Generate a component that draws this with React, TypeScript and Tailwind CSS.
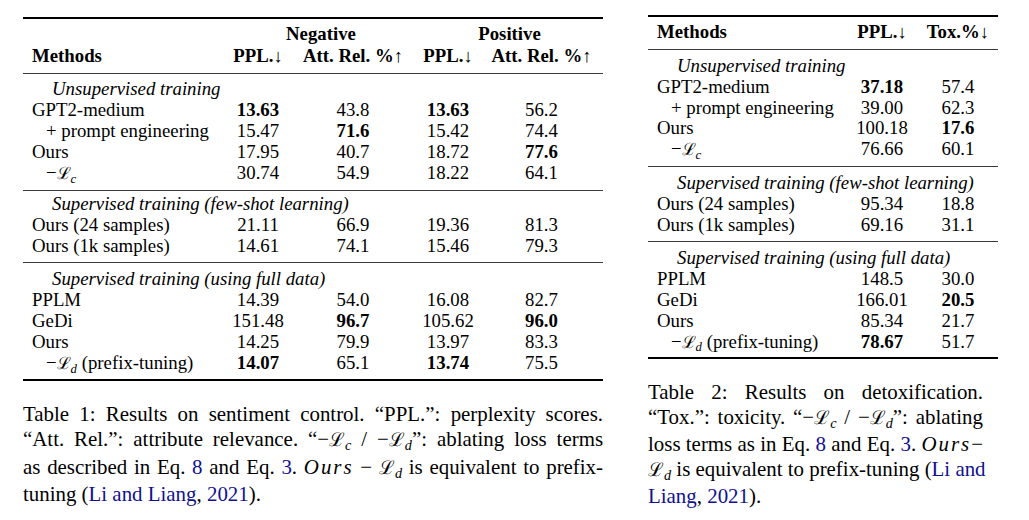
import { FC, ReactNode } from "react";

// "*" at the start of a value marks it bold
type Row = { label: ReactNode; indent?: boolean; values: string[] };
type Section = { title: string; pad: string; rows: Row[] };

const Cal: FC<{ s: string }> = ({ s }) => (
	<span className="whitespace-nowrap">
		<span className="font-['DejaVu_Serif',serif] text-[0.9em]">ℒ</span>
		<span className="relative top-[0.28em] text-[0.68em] italic">{s}</span>
	</span>
);

const Link: FC<{ children: ReactNode }> = ({ children }) => (
	<span className="text-[#101090]">{children}</span>
);

const table1: Section[] = [
	{
		title: "Unsupervised training",
		pad: "pt-[4px] pb-[7px]",
		rows: [
			{ label: "GPT2-medium", values: ["*13.63", "43.8", "*13.63", "56.2"] },
			{ label: "+ prompt engineering", indent: true, values: ["15.47", "*71.6", "15.42", "74.4"] },
			{ label: "Ours", values: ["17.95", "40.7", "18.72", "*77.6"] },
			{ label: <>−<Cal s="c" /></>, indent: true, values: ["30.74", "54.9", "18.22", "64.1"] },
		],
	},
	{
		title: "Supervised training (few-shot learning)",
		pad: "pt-[2px] pb-[6px]",
		rows: [
			{ label: "Ours (24 samples)", values: ["21.11", "66.9", "19.36", "81.3"] },
			{ label: "Ours (1k samples)", values: ["14.61", "74.1", "15.46", "79.3"] },
		],
	},
	{
		title: "Supervised training (using full data)",
		pad: "pt-[5px] pb-[6px]",
		rows: [
			{ label: "PPLM", values: ["14.39", "54.0", "16.08", "82.7"] },
			{ label: "GeDi", values: ["151.48", "*96.7", "105.62", "*96.0"] },
			{ label: "Ours", values: ["14.25", "79.9", "13.97", "83.3"] },
			{ label: <>−<Cal s="d" /> (prefix-tuning)</>, indent: true, values: ["*14.07", "65.1", "*13.74", "75.5"] },
		],
	},
];

const table2: Section[] = [
	{
		title: "Unsupervised training",
		pad: "pt-[5px] pb-[7px]",
		rows: [
			{ label: "GPT2-medium", values: ["*37.18", "57.4"] },
			{ label: "+ prompt engineering", indent: true, values: ["39.00", "62.3"] },
			{ label: "Ours", values: ["100.18", "*17.6"] },
			{ label: <>−<Cal s="c" /></>, indent: true, values: ["76.66", "60.1"] },
		],
	},
	{
		title: "Supervised training (few-shot learning)",
		pad: "pt-[5px] pb-[7px]",
		rows: [
			{ label: "Ours (24 samples)", values: ["95.34", "18.8"] },
			{ label: "Ours (1k samples)", values: ["69.16", "31.1"] },
		],
	},
	{
		title: "Supervised training (using full data)",
		pad: "pt-[5px] pb-[6px]",
		rows: [
			{ label: "PPLM", values: ["148.5", "30.0"] },
			{ label: "GeDi", values: ["166.01", "*20.5"] },
			{ label: "Ours", values: ["85.34", "21.7"] },
			{ label: <>−<Cal s="d" /> (prefix-tuning)</>, indent: true, values: ["*78.67", "51.7"] },
		],
	},
];

const Value: FC<{ v: string }> = ({ v }) =>
	v.startsWith("*") ? <span className="font-bold">{v.slice(1)}</span> : <span>{v}</span>;

const Body: FC<{ sections: Section[]; grid: string; rowH: string }> = ({ sections, grid, rowH }) => (
	<>
		{sections.map((sec, i) => (
			<div key={i}>
				<div className="h-px bg-[#3a3a3a]" />
				<div className={sec.pad}>
					<div className={`${rowH} pl-[29px] italic`}>{sec.title}</div>
					{sec.rows.map((r, j) => (
						<div key={j} className={`${grid} ${rowH}`}>
							<div className={r.indent ? "pl-[23px] whitespace-nowrap" : "pl-[9px] whitespace-nowrap"}>{r.label}</div>
							{r.values.map((v, k) => (
								<div key={k} className="text-center">
									<Value v={v} />
								</div>
							))}
						</div>
					))}
				</div>
			</div>
		))}
	</>
);

const Line: FC<{ children: ReactNode; last?: boolean }> = ({ children, last }) => (
	<div className={last ? "text-left whitespace-nowrap" : "text-justify [text-align-last:justify] whitespace-nowrap"}>{children}</div>
);

const Arrow: FC<{ up?: boolean }> = ({ up }) => <span className="font-normal">{up ? "↑" : "↓"}</span>;

export default function App() {
	const grid1 = "grid grid-cols-[203px_64px_126px_64px_123px]";
	const grid2 = "grid grid-cols-[198px_72px_80px]";

	return (
		<div className="w-[1029px] h-[520px] bg-white text-black font-['Liberation_Serif','DejaVu_Serif',serif] flex gap-[45px] pl-[23px] pt-[15px] overflow-hidden">
			{/* Table 1 */}
			<div className="w-[580px] pt-[2px] flex flex-col">
				<div className="text-[18.8px] leading-[21px]">
					<div className="h-[2px] bg-black" />
					<div className="pt-[4px] pb-[6px] font-bold">
						<div className={`${grid1} h-[22px]`}>
							<div />
							<div className="col-span-2 text-center">Negative</div>
							<div className="col-span-2 text-center">Positive</div>
						</div>
						<div className={`${grid1} h-[22px]`}>
							<div className="pl-[9px]">Methods</div>
							<div className="text-center">PPL.<Arrow /></div>
							<div className="text-center whitespace-nowrap">Att. Rel. %<Arrow up /></div>
							<div className="text-center">PPL.<Arrow /></div>
							<div className="text-center whitespace-nowrap">Att. Rel. %<Arrow up /></div>
						</div>
					</div>
					<Body sections={table1} grid={grid1} rowH="h-[21px]" />
					<div className="h-[2px] bg-black" />
				</div>
				<div className="mt-[21px] text-[20.9px] leading-[25.3px]">
					<Line>Table 1: Results on sentiment control. “PPL.”: perplexity scores.</Line>
					<Line>
						“Att. Rel.”: attribute relevance. “−<Cal s="c" /> / −<Cal s="d" />”: ablating loss terms
					</Line>
					<Line>
						as described in Eq. <Link>8</Link> and Eq. <Link>3</Link>.{" "}
						<span className="italic tracking-[2px]">Ours</span> − <Cal s="d" /> is equivalent to prefix-
					</Line>
					<Line last>
						tuning (<Link>Li and Liang</Link>, <Link>2021</Link>).
					</Line>
				</div>
			</div>

			{/* Table 2 */}
			<div className="w-[350px] flex flex-col">
				<div className="text-[18.8px] leading-[21px]">
					<div className="h-[2px] bg-black" />
					<div className="pt-[4px] pb-[6px] font-bold">
						<div className={`${grid2} h-[22px]`}>
							<div className="pl-[9px]">Methods</div>
							<div className="text-center">PPL.<Arrow /></div>
							<div className="text-center whitespace-nowrap">Tox.%<Arrow /></div>
						</div>
					</div>
					<Body sections={table2} grid={grid2} rowH="h-[20.8px]" />
					<div className="h-[2px] bg-black" />
				</div>
				<div className="mt-[21px] w-[335px] text-[20.9px] leading-[25px]">
					<Line>Table 2: Results on detoxification.</Line>
					<Line>
						“Tox.”: toxicity. “−<Cal s="c" /> / −<Cal s="d" />”: ablating
					</Line>
					<Line>
						loss terms as in Eq. <Link>8</Link> and Eq. <Link>3</Link>.{" "}
						<span className="italic tracking-[2px]">Ours</span>−
					</Line>
					<Line>
						<Cal s="d" /> is equivalent to prefix-tuning (<Link>Li and</Link>
					</Line>
					<Line last>
						<Link>Liang</Link>, <Link>2021</Link>).
					</Line>
				</div>
			</div>
		</div>
	);
}
